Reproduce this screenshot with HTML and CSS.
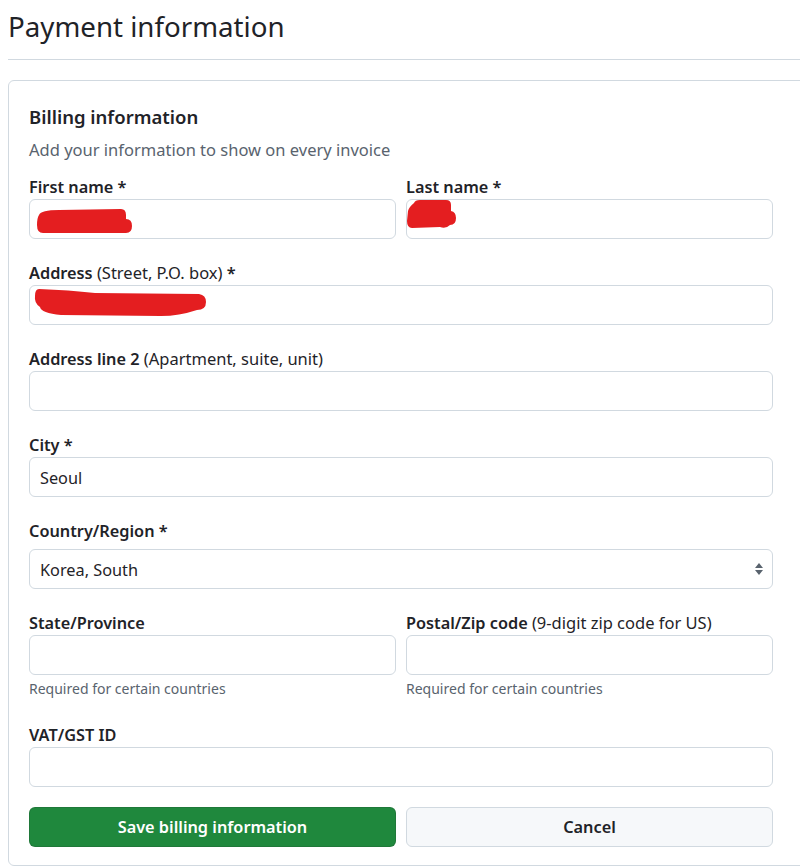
FILE: index.html
```html
<!DOCTYPE html>
<html lang="en">
<head>
<meta charset="utf-8">
<title>Payment information</title>
<link rel="stylesheet" href="styles.css">
</head>
<body>
<div class="sheet">
  <h1 class="page-title">Payment information</h1>
  <section class="card">
    <h2 class="card-title">Billing information</h2>
    <p class="card-lead">Add your information to show on every invoice</p>
    <form class="billing">
      <div class="row row-2">
        <div class="field">
          <label class="label">First name *</label>
          <div class="control">
            <input class="input" type="text" value="">
            <svg class="redact" width="120" height="40" viewBox="0 0 120 40"><path d="M10 16 Q12 11 30 11 L92 10 Q97 10 97 16 L97 20 Q103 20 103 27 Q103 34 97 34 L14 34 Q8 34 8 26 Q8 19 10 16 Z"/></svg>
          </div>
        </div>
        <div class="field">
          <label class="label">Last name *</label>
          <div class="control">
            <input class="input" type="text" value="">
            <svg class="redact" width="60" height="40" viewBox="0 0 60 40"><path d="M8 4 Q9 1 14 1 L40 1 Q45 1 45 6 L45 12 Q50 13 50 19 Q50 26 44 26 Q40 30 34 28 L6 29 Q1 29 1 22 L2 12 Q3 8 8 4 Z"/></svg>
          </div>
        </div>
      </div>
      <div class="row">
        <div class="field">
          <label class="label">Address <span class="hint">(Street, P.O. box)</span> *</label>
          <div class="control">
            <input class="input" type="text" value="">
            <svg class="redact" width="190" height="40" viewBox="0 0 190 40"><path d="M10 4 Q40 5 66 8 L170 9 Q177 10 177 17 Q177 25 168 25 Q150 31 132 31 L32 30 Q12 28 11 22 Q5 18 6 11 Q6 4 10 4 Z"/></svg>
          </div>
        </div>
      </div>
      <div class="row">
        <div class="field">
          <label class="label">Address line 2 <span class="hint">(Apartment, suite, unit)</span></label>
          <input class="input" type="text" value="">
        </div>
      </div>
      <div class="row">
        <div class="field">
          <label class="label">City *</label>
          <input class="input" type="text" value="Seoul">
        </div>
      </div>
      <div class="row row-select">
        <div class="field">
          <label class="label">Country/Region *</label>
          <div class="control">
            <select class="input select">
              <option>Korea, South</option>
            </select>
            <svg class="select-arrow" width="8" height="14" viewBox="0 0 8 14"><path d="M0 6 L4 1 L8 6 Z M0 8 L4 13 L8 8 Z"/></svg>
          </div>
        </div>
      </div>
      <div class="row row-2">
        <div class="field">
          <label class="label">State/Province</label>
          <input class="input" type="text" value="">
          <p class="note">Required for certain countries</p>
        </div>
        <div class="field">
          <label class="label">Postal/Zip code <span class="hint">(9-digit zip code for US)</span></label>
          <input class="input" type="text" value="">
          <p class="note">Required for certain countries</p>
        </div>
      </div>
      <div class="row row-after-note">
        <div class="field">
          <label class="label">VAT/GST ID</label>
          <input class="input" type="text" value="">
        </div>
      </div>
      <div class="actions">
        <button class="btn btn-primary" type="button">Save billing information</button>
        <button class="btn btn-cancel" type="button">Cancel</button>
      </div>
    </form>
  </section>
</div>
</body>
</html>
```
FILE: styles.css
```css
html, body {
  overflow: hidden;
}
body {
  margin: 8px;
  font-family: "Noto Sans", "Open Sans", sans-serif;
  color: #1f2328;
  background: #ffffff;
}
.sheet {
  width: 840px;
}
.page-title {
  margin: 0;
  padding-bottom: 14px;
  border-bottom: 1px solid #d1d9e0;
  font-size: 27.7px;
  line-height: 37px;
  font-weight: 400;
}
.card {
  margin-top: 20px;
  border: 1px solid #d1d9e0;
  border-radius: 6px;
  padding: 20px 20px 18px;
}
.card-title {
  margin: 2px 0 0;
  font-size: 18.5px;
  line-height: 28px;
  font-weight: 600;
}
.card-lead {
  margin: 7px 0 0;
  font-size: 16.5px;
  line-height: 24px;
  color: #59636e;
}
.billing {
  width: 744px;
  margin-top: 13px;
}
.row {
  display: grid;
  grid-template-columns: 1fr;
  gap: 10px;
  margin-top: 22px;
}
.row:first-child {
  margin-top: 0;
}
.row-2 {
  grid-template-columns: 1fr 1fr;
}
.row-after-note {
  margin-top: 24px;
}
.label {
  display: block;
  padding-top: 1px;
  margin-bottom: 1px;
  font-size: 16.3px;
  line-height: 22px;
  font-weight: 600;
}
.label .hint {
  font-size: 16.5px;
  font-weight: 400;
}
.row-select .label {
  margin-bottom: 7px;
}
.control {
  position: relative;
}
.input {
  display: block;
  box-sizing: border-box;
  width: 100%;
  height: 40px;
  margin: 0;
  padding: 2px 10px 0;
  border: 1px solid #d1d9e0;
  border-radius: 6px;
  background: #ffffff;
  font-family: "Noto Sans", "Open Sans", sans-serif;
  font-size: 16.3px;
  color: #1f2328;
  outline: none;
}
.select {
  appearance: none;
  -webkit-appearance: none;
}
.select-arrow {
  position: absolute;
  right: 10px;
  top: 13px;
  fill: #59636e;
}
.redact {
  position: absolute;
  left: 0;
  top: 0;
  fill: #e41e20;
}
.note {
  margin: 4px 0 0;
  font-size: 14px;
  line-height: 20px;
  color: #59636e;
}
.actions {
  display: grid;
  grid-template-columns: 1fr 1fr;
  gap: 10px;
  margin-top: 20px;
}
.btn {
  height: 40px;
  margin: 0;
  border-radius: 6px;
  font-family: "Noto Sans", "Open Sans", sans-serif;
  font-size: 16.3px;
  font-weight: 600;
  cursor: pointer;
}
.btn-primary {
  background: #1f883d;
  border: 1px solid rgba(31, 35, 40, 0.15);
  color: #ffffff;
}
.btn-cancel {
  background: #f6f8fa;
  border: 1px solid #d1d9e0;
  color: #1f2328;
}
```
